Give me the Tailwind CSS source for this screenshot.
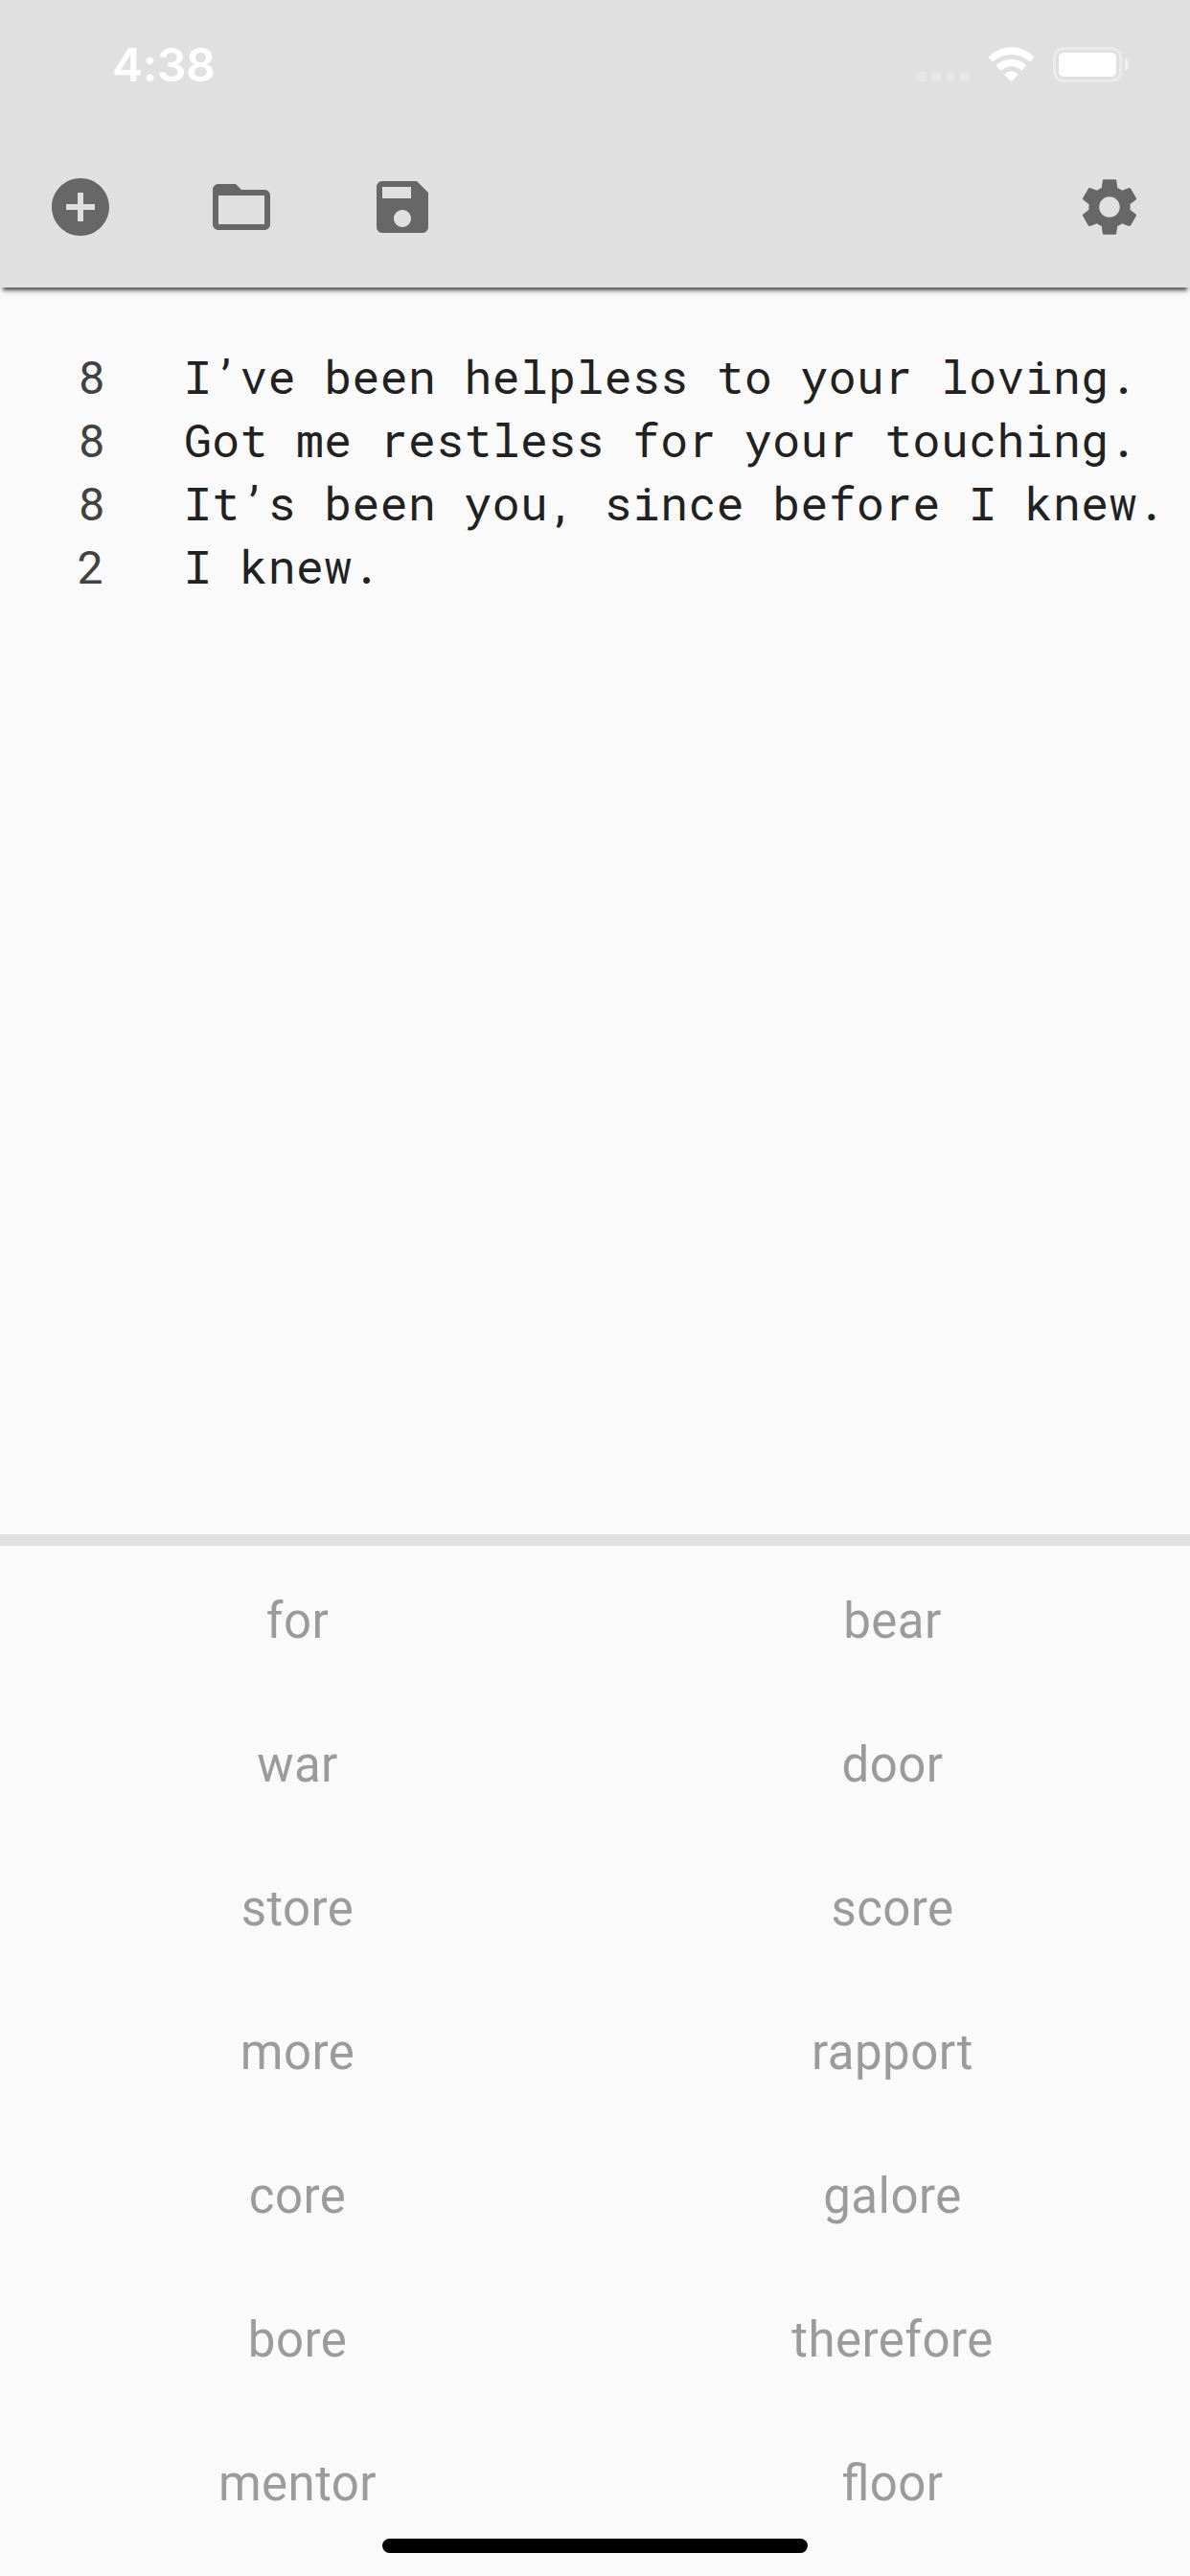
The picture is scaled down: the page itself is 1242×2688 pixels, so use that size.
<!DOCTYPE html>
<html lang="en">
<head>
<meta charset="utf-8">
<title>Lyrics</title>
<script src="https://cdn.jsdelivr.net/npm/@tailwindcss/browser@4"></script>
</head>
<body class="w-[1242px] h-[2688px] overflow-hidden bg-[#fafafa] font-['Roboto',sans-serif] flex flex-col relative">
<header class="relative h-[300px] shrink-0 flex flex-col bg-[#e0e0e0] shadow-[0_6px_4px_-3px_rgba(0,0,0,0.65),0_2px_12px_0_rgba(0,0,0,0.1)]">
  <div class="h-[132px] flex items-start justify-between pl-[117px] pr-[63px]">
    <div class="mt-[38px] text-[48px] leading-[60px] font-semibold tracking-[-0.3px] text-white font-['Inter',sans-serif]">4:38</div>
    <div class="mt-[48px] flex items-start">
      <svg class="w-[56px] h-[40px]" viewBox="0 0 56 40" fill="#e6e6e6"><rect x="0" y="27" width="10" height="10" rx="3"/><rect x="15" y="27" width="10" height="10" rx="3"/><rect x="30" y="27" width="10" height="10" rx="3"/><rect x="45" y="27" width="10" height="10" rx="3"/></svg>
      <svg class="ml-[18px] w-[50px] h-[40px]" viewBox="0 0 50 40" fill="#fff"><path d="M.8 11.2Q11 1.3 24.5 1.3T48.2 11.2Q48.6 11.8 48.2 12.3L44.3 16.2Q43.7 16.6 43.1 16.1Q35 9 24.5 9T5.9 16.1Q5.3 16.6 4.7 16.2L.8 12.3Q.4 11.8.8 11.2Z"/><path d="M9.2 19.8Q15.8 13.7 24.5 13.7T39.8 19.8Q40.3 20.4 39.8 21L35.9 25Q35.3 25.5 34.7 25Q30 21.2 24.5 21.2T14.3 25Q13.7 25.5 13.1 25L9.2 21Q8.7 20.4 9.2 19.8Z"/><path d="M17.8 29Q20.5 26.3 24.5 26.3T31.2 29Q31.7 29.6 31.2 30.2L25.2 36.4Q24.5 37 23.8 36.4L17.8 30.2Q17.3 29.6 17.8 29Z"/></svg>
      <svg class="ml-[18px] w-[80px] h-[40px]" viewBox="0 0 80 40"><rect x="1.5" y="2.5" width="69" height="34" rx="9.5" fill="none" stroke="#ebebeb" stroke-width="3"/><rect x="6" y="7" width="60" height="25" rx="5" fill="#fff"/><path d="M75 13Q79 15 79 19.5T75 26Z" fill="#f0f0f0"/></svg>
    </div>
  </div>
  <div class="h-[168px] flex items-center px-[48px] gap-[96px] text-[#676767]">
    <svg class="size-[72px]" viewBox="0 0 24 24" fill="currentColor"><path d="M12 2C6.48 2 2 6.48 2 12s4.48 10 10 10 10-4.48 10-10S17.52 2 12 2zm5 11h-4v4h-2v-4H7v-2h4V7h2v4h4v2z"/></svg>
    <svg class="size-[72px]" viewBox="0 0 24 24" fill="currentColor"><path d="M20 6h-8l-2-2H4c-1.1 0-1.99.9-1.99 2L2 18c0 1.1.9 2 2 2h16c1.1 0 2-.9 2-2V8c0-1.1-.9-2-2-2zm0 12H4V8h16v10z"/></svg>
    <svg class="size-[72px]" viewBox="0 0 24 24" fill="currentColor"><path d="M17 3H5c-1.11 0-2 .9-2 2v14c0 1.1.89 2 2 2h14c1.1 0 2-.9 2-2V7l-4-4zm-5 16c-1.66 0-3-1.34-3-3s1.34-3 3-3 3 1.34 3 3-1.34 3-3 3zm3-10H5V5h10v4z"/></svg>
    <svg class="size-[72px] ml-auto" viewBox="0 0 24 24" fill="currentColor"><path d="M19.14 12.94c.04-.3.06-.61.06-.94 0-.32-.02-.64-.07-.94l2.03-1.58c.18-.14.23-.41.12-.61l-1.92-3.32c-.12-.22-.37-.29-.59-.22l-2.39.96c-.5-.38-1.03-.7-1.62-.94l-.36-2.54c-.04-.24-.24-.41-.48-.41h-3.84c-.24 0-.43.17-.47.41l-.36 2.54c-.59.24-1.13.57-1.62.94l-2.39-.96c-.22-.08-.47 0-.59.22L2.74 8.87c-.12.21-.08.47.12.61l2.03 1.58c-.05.3-.09.63-.09.94s.02.64.07.94l-2.03 1.58c-.18.14-.23.41-.12.61l1.92 3.32c.12.22.37.29.59.22l2.39-.96c.5.38 1.03.7 1.62.94l.36 2.54c.05.24.24.41.48.41h3.84c.24 0 .44-.17.47-.41l.36-2.54c.59-.24 1.13-.56 1.62-.94l2.39.96c.22.08.47 0 .59-.22l1.92-3.32c.12-.22.07-.47-.12-.61l-2.01-1.58zM12 15.6c-1.98 0-3.6-1.62-3.6-3.6s1.62-3.6 3.6-3.6 3.6 1.62 3.6 3.6-1.62 3.6-3.6 3.6z"/></svg>
  </div>
</header>
<main class="h-[1301px] shrink-0 flex pt-[60px] text-[48px] leading-[66px] tracking-[0.45px] font-['Roboto_Mono','DejaVu_Sans_Mono',monospace]">
  <div class="w-[110px] text-right text-[#424242]"><div>8</div><div>8</div><div>8</div><div>2</div></div>
  <div class="ml-[82px] whitespace-pre text-[#212121]"><div>I’ve been helpless to your loving.</div><div>Got me restless for your touching.</div><div>It’s been you, since before I knew.</div><div>I knew.</div></div>
</main>
<div class="h-[12px] shrink-0 bg-[#e0e0e0]"></div>
<section class="grid grid-cols-2 auto-rows-[150px] items-center justify-items-center pt-[4px] text-[51px] leading-[60px] tracking-[0.45px] text-[#9b9b9b] [font-feature-settings:'liga'_1]">
  <div>for</div><div>bear</div><div>war</div><div>door</div><div>store</div><div>score</div><div>more</div><div>rapport</div><div>core</div><div>galore</div><div>bore</div><div>therefore</div><div>mentor</div><div>floor</div>
</section>
<div class="absolute left-[399px] top-[2649px] w-[444px] h-[15px] rounded-full bg-black"></div>
</body>
</html>
